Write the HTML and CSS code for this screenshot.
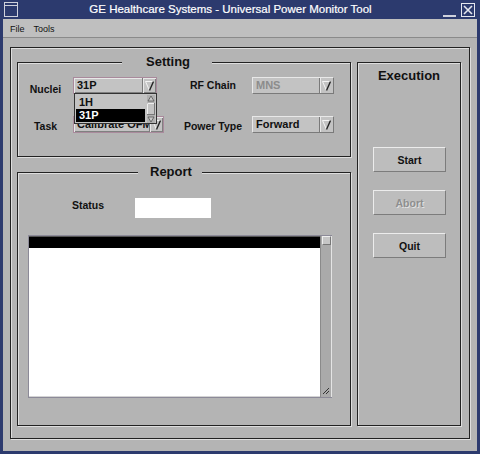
FILE: index.html
```html
<!DOCTYPE html>
<html lang="en">
<head>
  <meta charset="UTF-8">
  <title>Universal Power Monitor Tool</title>
  <link rel="stylesheet" href="styles.css">
</head>
<body>
<div class="window">
  <!-- barra de titulo -->
  <div class="titlebar">
    <span class="tb-icon"></span>
    <span class="tb-title">GE Healthcare Systems - Universal Power Monitor Tool</span>
    <span class="tb-min"></span>
    <span class="tb-close">
      <svg width="12" height="12" viewBox="0 0 12 12"><path d="M2 2 L10 10 M10 2 L2 10" stroke="#e4e6ee" stroke-width="1.6" fill="none"/></svg>
    </span>
  </div>

  <div class="menubar">
    <span>File</span>
    <span>Tools</span>
  </div>

  <div class="main">
    <div class="frame">
      <div class="left">

        <div class="group setting">
          <div class="group-title">Setting</div>
          <div class="setting-grid">
            <span class="lbl lbl-nuclei">Nuclei</span>
            <div class="combo focus nuclei">
              <span class="combo-text">31P</span>
              <span class="combo-arrow"><svg width="9" height="10" viewBox="0 0 9 10"><polygon points="0.5,0.5 8.5,0.5 4.5,9.5" fill="#c3c3c3"/><path d="M0.5 0.5 L8.5 0.5 M0.5 0.5 L4.5 9.5" stroke="#f4f4f4" fill="none"/><path d="M8.5 0.5 L4.5 9.5" stroke="#222" stroke-width="1.4" fill="none"/></svg></span>
              <div class="droplist">
                <div class="drop-items">
                  <div class="drop-item">1H</div>
                  <div class="drop-item selected">31P</div>
                </div>
                <div class="drop-scroll">
                  <svg width="8" height="28" viewBox="0 0 8 28">
                    <rect x="0" y="0" width="8" height="28" fill="#b0b0b0"/>
                    <polygon points="4,1 7,6 1,6" fill="#c8c8c8" stroke="#555" stroke-width="0.8"/>
                    <rect x="0.5" y="8.5" width="7" height="11" fill="#c4c4c4" stroke="#777"/>
                    <path d="M0.5 19 L0.5 8.5 L7 8.5" stroke="#eee" fill="none"/>
                    <polygon points="1,22 7,22 4,27" fill="#c8c8c8" stroke="#555" stroke-width="0.8"/>
                  </svg>
                </div>
              </div>
            </div>

            <span class="lbl">RF Chain</span>
            <div class="combo disabled rf">
              <span class="combo-text">MNS</span>
              <span class="combo-arrow"><svg width="9" height="10" viewBox="0 0 9 10"><polygon points="0.5,0.5 8.5,0.5 4.5,9.5" fill="#c3c3c3"/><path d="M0.5 0.5 L8.5 0.5 M0.5 0.5 L4.5 9.5" stroke="#f4f4f4" fill="none"/><path d="M8.5 0.5 L4.5 9.5" stroke="#222" stroke-width="1.4" fill="none"/></svg></span>
            </div>

            <span class="lbl lbl-low">Task</span>
            <div class="combo focus task">
              <span class="combo-text">Calibrate OFM</span>
              <span class="combo-arrow"><svg width="9" height="10" viewBox="0 0 9 10"><polygon points="0.5,0.5 8.5,0.5 4.5,9.5" fill="#c3c3c3"/><path d="M0.5 0.5 L8.5 0.5 M0.5 0.5 L4.5 9.5" stroke="#f4f4f4" fill="none"/><path d="M8.5 0.5 L4.5 9.5" stroke="#222" stroke-width="1.4" fill="none"/></svg></span>
            </div>

            <span class="lbl lbl-low">Power Type</span>
            <div class="combo power">
              <span class="combo-text">Forward</span>
              <span class="combo-arrow"><svg width="9" height="10" viewBox="0 0 9 10"><polygon points="0.5,0.5 8.5,0.5 4.5,9.5" fill="#c3c3c3"/><path d="M0.5 0.5 L8.5 0.5 M0.5 0.5 L4.5 9.5" stroke="#f4f4f4" fill="none"/><path d="M8.5 0.5 L4.5 9.5" stroke="#222" stroke-width="1.4" fill="none"/></svg></span>
            </div>
          </div>
        </div>

        <div class="group report">
          <div class="group-title">Report</div>
          <div class="status-row">
            <span class="lbl status-lbl">Status</span>
            <span class="status-box"></span>
          </div>
          <div class="log">
            <div class="log-body">
              <div class="log-head"></div>
            </div>
            <div class="log-scroll">
              <span class="sb-btn sb-up"></span>
              <span class="sb-btn sb-down">
                <svg width="8" height="8" viewBox="0 0 8 8"><path d="M1 7 L7 1 M4 7 L7 4" stroke="#333" fill="none"/><rect x="1" y="6" width="1" height="1" fill="#333"/></svg>
              </span>
            </div>
          </div>
        </div>
      </div>

      <div class="group exec">
        <div class="exec-title">Execution</div>
        <div class="exec-buttons">
          <button class="btn">Start</button>
          <button class="btn" disabled>Abort</button>
          <button class="btn">Quit</button>
        </div>
      </div>
    </div>
  </div>
</div>
</body>
</html>
```

FILE: styles.css
```css
/* janela */
body {
  margin: 0;
  background-color: #2c3a6e;
  font-family: "Liberation Sans", Arial, sans-serif;
}

.window {
  width: 480px;
  height: 454px;
  box-sizing: border-box;
  padding: 0 3px 3px 3px;
  background-color: #2c3a6e;
  display: flex;
  flex-direction: column;
}

.titlebar {
  height: 19px;
  display: flex;
  align-items: center;
  color: #fff;
}

.tb-icon {
  width: 14px;
  height: 15px;
  margin-left: 1px;
  box-sizing: border-box;
  border: 1px solid #cfd1dc;
  background: linear-gradient(#cfd1dc, #cfd1dc) 0 2px / 100% 1px no-repeat;
}

.tb-title {
  flex: 1;
  text-align: center;
  font-size: 11.5px;
  line-height: 19px;
  -webkit-text-stroke: 0.2px #fff;
}

.tb-min {
  width: 13px;
  height: 14px;
  box-sizing: border-box;
  border-bottom: 2px solid #cfd1dc;
  margin-right: 5px;
}

.tb-close {
  width: 14px;
  height: 14px;
  box-sizing: border-box;
  border: 1px solid #e4e6ee;
  display: flex;
  align-items: center;
  justify-content: center;
  margin-right: 2px;
}

.menubar {
  height: 18px;
  border-bottom: 1px solid #8a8a8a;
  background-color: #bfbfbf;
  display: flex;
  align-items: center;
  gap: 9px;
  padding: 2px 0 0 7px;
  box-sizing: border-box;
  height: 19px;
  font-size: 9px;
  color: #111;
}

.main {
  flex: 1;
  background-color: #b4b4b4;
  padding: 9px 0 0 7px;
}

/* moldura externa */
.frame {
  width: 460px;
  height: 392px;
  box-sizing: border-box;
  border: 1px solid #222;
  box-shadow: 1px 1px 0 #dedede, inset 1px 1px 0 #dedede;
  padding: 14px 8px 12px 6px;
  display: flex;
  gap: 6px;
}

.left {
  width: 334px;
  display: flex;
  flex-direction: column;
  gap: 15px;
}

.group {
  box-sizing: border-box;
  border: 1px solid #222;
  box-shadow: 1px 1px 0 #dedede, inset 1px 1px 0 #dedede;
}

.group-title {
  width: fit-content;
  margin-top: -8px;
  line-height: 14px;
  font-size: 13px;
  font-weight: bold;
  background-color: #b4b4b4;
  color: #111;
}

.setting {
  height: 95px;
}

.setting .group-title {
  margin-left: 104px;
  padding: 0 22px 0 24px;
}

.report {
  height: 254px;
}

.report .group-title {
  margin-left: 120px;
  padding: 0 10px 0 12px;
}

.setting-grid {
  margin-top: 8px;
  display: grid;
  grid-template-columns: 55px 101px 78px 82px;
  grid-template-rows: 17px 17px;
  row-gap: 22px;
}

.lbl {
  font-size: 10.5px;
  font-weight: bold;
  line-height: 17px;
  text-align: center;
  color: #111;
  white-space: nowrap;
}

.lbl-nuclei {
  padding-top: 4px;
}

.lbl-low {
  padding-top: 2px;
}

/* combos */
.combo {
  position: relative;
  height: 17px;
  box-sizing: border-box;
  display: flex;
  background-color: #c3c3c3;
  border: 1px solid;
  border-color: #e8e8e8 #7a7a7a #7a7a7a #e8e8e8;
  font-size: 11px;
  font-weight: bold;
  color: #111;
}

.combo.focus {
  border-color: #a98a9c;
  box-shadow: inset 1px 1px 0 #e8e8e8, inset -1px -1px 0 #808080;
}

.nuclei { width: 84px; z-index: 2; }
.task { width: 91px; }
.rf, .power { width: 82px; }

.combo-text {
  flex: 1;
  padding-left: 3px;
  line-height: 15px;
  overflow: hidden;
  white-space: nowrap;
}

.disabled .combo-text {
  color: #8c8c8c;
}

.combo-arrow {
  width: 13px;
  border-left: 1px solid #7a7a7a;
  box-shadow: inset 1px 0 0 #e8e8e8;
  display: flex;
  align-items: center;
  justify-content: center;
}

.droplist {
  position: absolute;
  top: 15px;
  left: 0;
  width: 83px;
  height: 31px;
  box-sizing: border-box;
  border: 1px solid #333;
  background-color: #c3c3c3;
  display: flex;
  padding: 1px 1px 1px 1px;
}

.drop-items {
  flex: 1;
  padding-top: 1px;
}

.drop-item {
  height: 13px;
  line-height: 13px;
  padding-left: 3px;
  font-size: 11px;
  margin-right: 2px;
}

.drop-item.selected {
  background-color: #000;
  color: #fff;
}

.drop-scroll {
  width: 8px;
  display: flex;
}

/* relatorio */
.status-row {
  display: flex;
  align-items: flex-start;
  margin-top: 19px;
  padding-left: 54px;
}

.status-lbl {
  width: 63px;
  line-height: 14px;
  text-align: left;
}

.status-box {
  width: 76px;
  height: 20px;
  background-color: #fff;
}

.log {
  margin: 17px 0 0 10px;
  width: 304px;
  height: 163px;
  box-sizing: border-box;
  border: 1px solid #8c8a98;
  border-right: none;
  display: flex;
}

.log-body {
  flex: 1;
  background-color: #fff;
  border-bottom: 1px solid #d4d4d4;
}

.log-head {
  height: 11px;
  background-color: #000;
  border-top: 1px solid #555;
}

.log-scroll {
  width: 12px;
  box-sizing: border-box;
  background-color: #aaaaaa;
  border-left: 1px solid #8a8a8a;
  border-right: 1px solid #e4e4e4;
  display: flex;
  flex-direction: column;
  justify-content: space-between;
  align-items: center;
}

.sb-btn {
  width: 9px;
  height: 9px;
  box-sizing: border-box;
  background-color: #c6c6c6;
  border: 1px solid;
  border-color: #eee #777 #777 #eee;
  display: flex;
}

.sb-down {
  border: none;
  background: none;
  margin-bottom: 1px;
}

/* execucao */
.exec {
  width: 104px;
  display: flex;
  flex-direction: column;
  align-items: flex-start;
}

.exec-title {
  align-self: center;
  margin-top: 5px;
  font-size: 13px;
  font-weight: bold;
  line-height: 15px;
  color: #111;
}

.exec-buttons {
  margin: 64px 0 0 15px;
  display: flex;
  flex-direction: column;
  gap: 18px;
}

.btn {
  width: 73px;
  height: 25px;
  box-sizing: border-box;
  padding: 0;
  background-color: #bdbdbd;
  border: 1px solid;
  border-color: #ececec #7c7c7c #7c7c7c #ececec;
  font-family: "Liberation Sans", Arial, sans-serif;
  font-size: 10.5px;
  font-weight: bold;
  color: #111;
}

.btn:disabled {
  color: #8e8e8e;
  text-shadow: 1px 1px 0 #e2e2e2;
}
```
